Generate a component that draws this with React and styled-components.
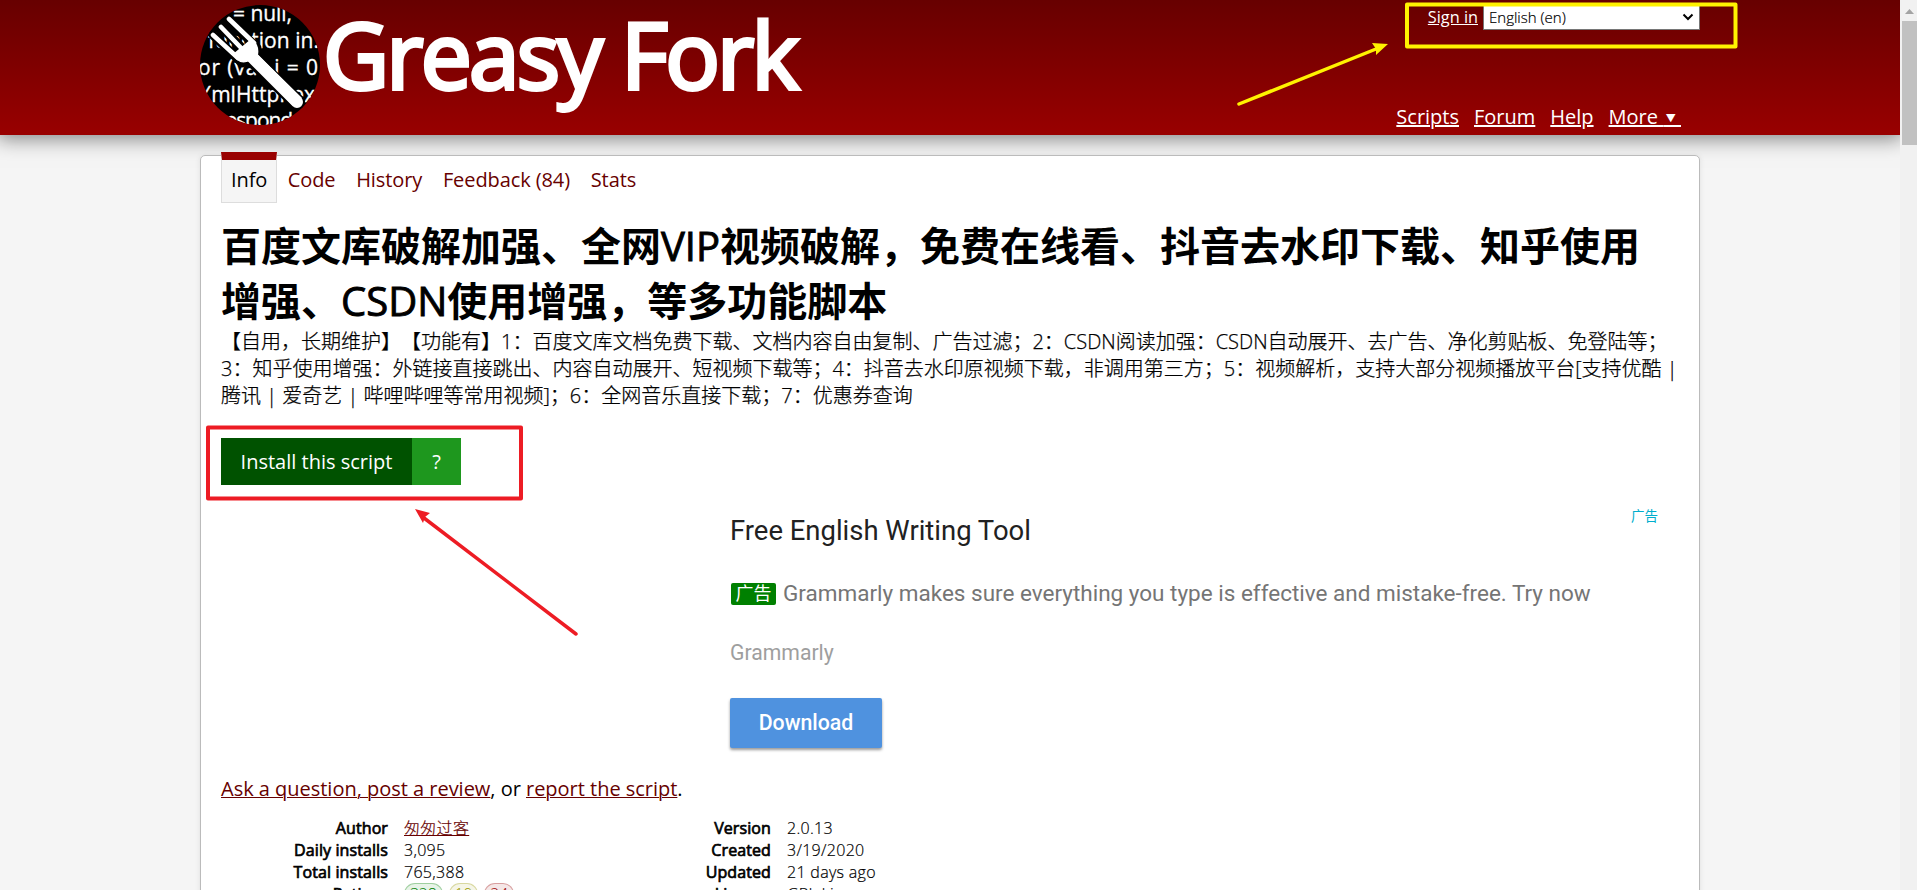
import React from 'react';
import styled, { createGlobalStyle } from 'styled-components';

const Global = createGlobalStyle`
  * { box-sizing: border-box; }
  html, body { margin: 0; height: 890px; overflow: hidden; }
  body { background: #f5f5f5; color: #000; font: 20px/27px "Open Sans", "Noto Sans CJK SC", sans-serif; text-spacing-trim: space-all; }
  a { color: #670000; text-decoration-thickness: from-font; }
`;
const Frame = styled.div`
  display: grid; grid-template-columns: 1900px 17px; height: 890px; overflow: hidden; position: relative;
`;
const Page = styled.div`overflow: hidden; height: 890px;`;
const Header = styled.header`
  height: 135px; padding: 0 200px; display: flex; justify-content: space-between;
  background: linear-gradient(#670000, #990000); box-shadow: 0 0 20px 3px rgba(0, 0, 0, 0.5);
`;
const Brand = styled.div`display: flex; align-items: flex-start; height: 135px;`;
const Logo = styled.svg`width: 120px; height: 120px; margin-top: 5px; flex: none;`;
const SiteName = styled.h1`
  margin: -12px 0 0 0; padding-left: 3px; font-size: 91px; line-height: 132px; font-weight: 400; letter-spacing: -2.8px; color: #fff; white-space: nowrap;
  -webkit-text-stroke: 3.8px #fff;
`;
const HeaderRight = styled.div`display: flex; flex-direction: column; justify-content: space-between; align-items: flex-end;`;
const LanguageBar = styled.div`display: flex; gap: 5px; padding-top: 5px; height: 32px; font-size: 16.3px; line-height: 24px;`;
const HeaderLink = styled.a`color: #fff; text-decoration: underline;`;
const LanguageSelect = styled.div`
  width: 217px; height: 25px; background: #fff; border: 1px solid #767676; display: flex; align-items: center;
  justify-content: space-between; padding: 0 5px 1px 5px; font-size: 15px; font-weight: 300; -webkit-text-stroke: 0.2px #000;
  svg { width: 12px; height: 8px; }
`;
const MainNav = styled.nav`
  display: flex; gap: 15px; padding: 0 19px 0 0; height: 32px; line-height: 27px;
  small { font-size: 10px; vertical-align: 2px; }
`;
const Content = styled.main`
  width: 1500px; height: 800px; margin: 20px auto 0; padding: 0 20px; background: #fff; position: relative;
  border: 1px solid #bbb; border-radius: 5px; box-shadow: 0 0 5px #ddd;
`;
const Tabs = styled.nav`display: flex; margin-top: -4px; height: 51px;`;
const Tab = styled.a`
  padding: 14px 10px 0; height: 51px; color: ${p => p.$active ? '#000' : '#670000'}; margin-right: 0.7px; letter-spacing: -0.09px;
  ${p => p.$active && 'background: #f5f5f5; border: 1px solid #ddd; border-top: 8px solid #900; padding: 6px 0 0 9px; width: 56px;'}
`;
const Title = styled.h2`margin: 16px 0 0; font-size: 40px; line-height: 54.5px; font-weight: 700; white-space: nowrap;
  span { font-weight: 500; -webkit-text-stroke: 0.9px #000; }
`;
const Description = styled.p`margin: 0; line-height: 27px; white-space: nowrap; font-weight: 300; -webkit-text-stroke: 0.25px #000;`;
const InstallRow = styled.div`display: flex; margin-top: 29px; height: 47px; color: #fff; line-height: 47px;`;
const InstallButton = styled.div`width: ${p => p.$w}px; text-align: center; background: ${p => p.$bg};`;
const Ad = styled.section`
  margin-top: 17px; height: 266px; padding-left: 509px; position: relative; font-family: Roboto, "Noto Sans CJK SC", sans-serif;
  display: flex; flex-direction: column; align-items: flex-start;
`;
const AdTop = styled.div`height: 60px; width: 100%; display: flex; justify-content: space-between;`;
const AdTitle = styled.div`font-size: 27.45px; line-height: 38px; margin-top: 10px; color: #212121;`;
const AdMark = styled.span`font: 13.5px/20px "Noto Sans CJK SC", sans-serif; color: #00aecd; margin: 3px 21px 0 0;`;
const AdCopy = styled.div`display: flex; align-items: center; gap: 7px; height: 30px; margin-top: 16px; font-size: 22.5px; color: #757575;`;
const AdBadge = styled.span`
  width: 45px; height: 22px; border-radius: 2px; background: #008000; color: #fff; text-align: center; font-size: 18px; line-height: 22px; margin: 2px 0 0 1px;
`;
const Advertiser = styled.div`font-size: 21.2px; line-height: 30px; margin-top: 30px; color: #9e9e9e;`;
const Download = styled.div`
  width: 152px; height: 50px; margin-top: 30px; border-radius: 2px; background: #4f92df; color: #fff; text-align: center;
  font-size: 21.3px; font-weight: 500; line-height: 50px; box-shadow: 0 2px 3px rgba(0, 0, 0, 0.4);
`;
const Ask = styled.p`margin: 7px 0 0; line-height: 27px; letter-spacing: -0.02px;`;
const Stats = styled.div`display: flex; margin-top: 15px; font-size: 16px; line-height: 22px;`;
const StatList = styled.dl`
  margin: 0; width: ${p => p.$w}px; display: grid; grid-template-columns: ${p => p.$label}px 1fr; column-gap: 16px;
  dt { text-align: right; font-weight: 400; letter-spacing: 0.1px; -webkit-text-stroke: 0.7px #000; }
  dd { margin: 0; font-weight: 300; letter-spacing: 0.3px; -webkit-text-stroke: 0.2px; }
`;
const Ratings = styled.dd`display: flex; gap: 6px;`;
const Rating = styled.span`
  height: 22px; line-height: 21px; padding: 0 5px; border: 1px solid ${p => p.$c}50; border-radius: 11px; background: ${p => p.$c}18; color: ${p => p.$c}; letter-spacing: -0.3px; -webkit-text-stroke: 0;
`;
const Scrollbar = styled.div`
  background: #f1f1f1; display: flex; flex-direction: column; align-items: center;
  svg { width: 17px; height: 21px; }
`;
const Thumb = styled.div`width: 15px; height: 124px; background: #c1c1c1; margin-left: 2px;`;
const Markup = styled.svg`position: absolute; left: 0; top: 0; width: 1917px; height: 890px; pointer-events: none;`;

const GreasyLogo = () => (
  <Logo viewBox="0 0 120 120">
    <defs><clipPath id="disc"><circle cx="60" cy="60" r="60" /></clipPath></defs>
    <circle cx="60" cy="60" r="60" fill="#000" />
    <g clipPath="url(#disc)">
      <g fill="#fff" stroke="#fff" strokeWidth="0.3" fontSize="21" fontFamily="Open Sans, sans-serif">
        <text x="33" y="16" textLength="59">= null,</text>
        <text x="8" y="43" textLength="111">function in.</text>
        <text x="-2" y="70" textLength="120">or (var i = 0</text>
        <text x="-1" y="97" textLength="116">XmlHttpRex</text>
        <text x="18" y="123" textLength="84">responds</text>
      </g>
      <g stroke="#000" fill="none" strokeLinecap="round" strokeWidth="9">
        <path d="M13 30L42 58M21 22L50 51M29 14L57 43" />
        <path d="M48 50L97 97" strokeWidth="16" />
      </g>
      <g stroke="#fff" fill="none" strokeLinecap="round" strokeWidth="4.6">
        <path d="M13 30L38 53M21 22L45 47M29 14L54 38" />
        <path d="M52 52L97 97" strokeWidth="12" />
      </g>
      <path d="M33 49L51 34Q60 39 58 50L102 93L93 101L50 56Q38 61 33 49Z" fill="#fff" />
    </g>
  </Logo>
);

export default function App() {
  return (
    <Frame>
      <Global />
      <Page>
        <Header>
          <Brand><GreasyLogo /><SiteName>Greasy Fork</SiteName></Brand>
          <HeaderRight>
            <LanguageBar>
              <HeaderLink>Sign in</HeaderLink>
              <LanguageSelect>English (en)<svg viewBox="0 0 12 8"><path d="M1.5 1.5L6 6L10.5 1.5" fill="none" stroke="#000" strokeWidth="2" /></svg></LanguageSelect>
            </LanguageBar>
            <MainNav>
              <HeaderLink>Scripts</HeaderLink><HeaderLink>Forum</HeaderLink><HeaderLink>Help</HeaderLink>
              <HeaderLink>More <small>&nbsp;▼&nbsp;&nbsp;</small></HeaderLink>
            </MainNav>
          </HeaderRight>
        </Header>
        <Content>
          <Tabs>
            <Tab $active>Info</Tab><Tab>Code</Tab><Tab>History</Tab><Tab>Feedback (84)</Tab><Tab>Stats</Tab>
          </Tabs>
          <Title>百度文库破解加强、全网<span>VIP</span>视频破解，免费在线看、抖音去水印下载、知乎使用<br />增强、<span>CSDN</span>使用增强，等多功能脚本</Title>
          <Description>
            【自用，长期维护】【功能有】1：百度文库文档免费下载、文档内容自由复制、广告过滤；2：CSDN阅读加强：CSDN自动展开、去广告、净化剪贴板、免登陆等；<br />
            3：知乎使用增强：外链接直接跳出、内容自动展开、短视频下载等；4：抖音去水印原视频下载，非调用第三方；5：视频解析，支持大部分视频播放平台[支持优酷 |<br />
            腾讯 | 爱奇艺 | 哔哩哔哩等常用视频]；6：全网音乐直接下载；7：优惠券查询
          </Description>
          <InstallRow>
            <InstallButton $w={191} $bg="#005200">Install this script</InstallButton>
            <InstallButton $w={49} $bg="#1e971e">?</InstallButton>
          </InstallRow>
          <Ad>
            <AdTop><AdTitle>Free English Writing Tool</AdTitle><AdMark>广告</AdMark></AdTop>
            <AdCopy><AdBadge>广告</AdBadge>Grammarly makes sure everything you type is effective and mistake-free. Try now</AdCopy>
            <Advertiser>Grammarly</Advertiser>
            <Download>Download</Download>
          </Ad>
          <Ask><a href="#ask">Ask a question, post a review</a>, or <a href="#report">report the script</a>.</Ask>
          <Stats>
            <StatList $w={383} $label={167}>
              <dt>Author</dt><dd><a href="#author">匆匆过客</a></dd>
              <dt>Daily installs</dt><dd>3,095</dd>
              <dt>Total installs</dt><dd>765,388</dd>
              <dt>Ratings</dt>
              <Ratings><Rating $c="#008000">328</Rating><Rating $c="#999900">10</Rating><Rating $c="#990000">24</Rating></Ratings>
            </StatList>
            <StatList $w={400} $label={167}>
              <dt>Version</dt><dd>2.0.13</dd>
              <dt>Created</dt><dd>3/19/2020</dd>
              <dt>Updated</dt><dd>21 days ago</dd>
              <dt>License</dt><dd>GPL License</dd>
            </StatList>
          </Stats>
        </Content>
      </Page>
      <Scrollbar>
        <svg viewBox="0 0 17 21"><path d="M5 14L9.5 9L14 14Z" fill="#a3a3a3" /></svg>
        <Thumb />
      </Scrollbar>
      <Markup viewBox="0 0 1917 890">
        <rect x="1407" y="4.5" width="328.5" height="42" fill="none" stroke="#fff200" strokeWidth="4" strokeLinejoin="round" />
        <path d="M1239 104L1376 49" stroke="#fff200" strokeWidth="3.5" strokeLinecap="round" />
        <path d="M1388 44L1372 43L1376 49L1376 55Z" fill="#fff200" />
        <rect x="208" y="427.5" width="313" height="71" fill="none" stroke="#ed1c24" strokeWidth="4" strokeLinejoin="round" />
        <path d="M576 634L424 518" stroke="#ed1c24" strokeWidth="3.5" strokeLinecap="round" />
        <path d="M415 509L430 513L425 517L423 523Z" fill="#ed1c24" />
      </Markup>
    </Frame>
  );
}
